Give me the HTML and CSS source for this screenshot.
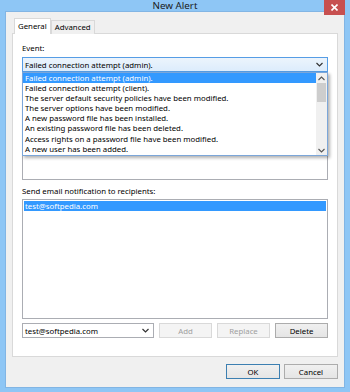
FILE: index.html
```html
<!DOCTYPE html>
<html lang="en">
<head>
  <meta charset="UTF-8">
  <title>New Alert</title>
  <link rel="stylesheet" href="styles.css">
</head>
<body>
  <div class="window">
    <!-- Title bar -->
    <div class="titlebar">
      <span class="title">New Alert</span>
      <div class="close-btn">
        <svg width="7" height="7" viewBox="0 0 7 7"><path d="M0.5 0.5 L6.5 6.5 M6.5 0.5 L0.5 6.5" stroke="#fff" stroke-width="1.6"/></svg>
      </div>
    </div>

    <div class="client">
      <div class="tabs">
        <div class="tab active">General</div>
        <div class="tab">Advanced</div>
      </div>

      <div class="panel">
        <div class="label">Event:</div>
        <div class="event-wrap">
          <div class="combo focused">
            <span>Failed connection attempt (admin).</span>
            <svg class="arrow" width="7" height="5" viewBox="0 0 7 5"><path d="M0.5 1 L3.5 4 L6.5 1" fill="none" stroke="#333" stroke-width="1.2"/></svg>
          </div>
          <div class="listbox message"></div>

          <!-- open dropdown list -->
          <div class="dropdown">
            <ul class="items">
              <li class="selected">Failed connection attempt (admin).</li>
              <li>Failed connection attempt (client).</li>
              <li>The server default security policies have been modified.</li>
              <li>The server options have been modified.</li>
              <li>A new password file has been installed.</li>
              <li>An existing password file has been deleted.</li>
              <li>Access rights on a password file have been modified.</li>
              <li>A new user has been added.</li>
            </ul>
            <div class="scrollbar">
              <svg width="7" height="5" viewBox="0 0 7 5"><path d="M0.5 4 L3.5 1 L6.5 4" fill="none" stroke="#555" stroke-width="1.1"/></svg>
              <div class="track"><div class="thumb"></div></div>
              <svg width="7" height="5" viewBox="0 0 7 5"><path d="M0.5 1 L3.5 4 L6.5 1" fill="none" stroke="#555" stroke-width="1.1"/></svg>
            </div>
          </div>
        </div>

        <div class="label second">Send email notification to recipients:</div>
        <ul class="listbox recipients">
          <li class="selected">test@softpedia.com</li>
        </ul>

        <div class="edit-row">
          <div class="combo plain">
            <span>test@softpedia.com</span>
            <svg class="arrow" width="7" height="5" viewBox="0 0 7 5"><path d="M0.5 1 L3.5 4 L6.5 1" fill="none" stroke="#333" stroke-width="1.2"/></svg>
          </div>
          <button class="btn" disabled>Add</button>
          <button class="btn" disabled>Replace</button>
          <button class="btn">Delete</button>
        </div>
      </div>

      <div class="dialog-buttons">
        <button class="btn default">OK</button>
        <button class="btn">Cancel</button>
      </div>
    </div>
  </div>
</body>
</html>
```

FILE: styles.css
```css
body {
  margin: 0;
  font-family: 'Noto Sans', 'Open Sans', sans-serif;
  font-size: 7.8px;
  color: #000;
}
ul {
  margin: 0;
  padding: 0;
  list-style: none;
}

/* Window frame */
.window {
  width: 350px;
  height: 392px;
  box-sizing: border-box;
  background: #8ec6f5;
  padding: 0 6px 7px;
  display: flex;
  flex-direction: column;
}
.titlebar {
  position: relative;
  height: 21px;
  display: flex;
  justify-content: center;
  align-items: center;
}
.title {
  font-size: 9.8px;
  color: #1a1a1a;
  margin-top: -1px;
}
.close-btn {
  position: absolute;
  top: 0;
  right: -1px;
  width: 21px;
  height: 15px;
  background: #c75050;
  display: flex;
  justify-content: center;
  align-items: center;
}

.client {
  flex: 1;
  background: #f0f0f0;
  box-shadow: 0 0 0 1px #82b5e4;
  padding: 6px 6px 8px;
  display: flex;
  flex-direction: column;
}

/* Tabs */
.tabs {
  display: flex;
  align-items: flex-end;
  padding-left: 2px;
  margin-bottom: -1px;
  position: relative;
  z-index: 1;
}
.tab {
  height: 13px;
  line-height: 12px;
  padding: 0 3px;
  border: 1px solid #d9d9d9;
  border-bottom: none;
  background: #f0f0f0;
}
.tab.active {
  height: 15px;
  line-height: 14px;
  background: #fff;
  border-color: #d9d9d9;
}

.panel {
  height: 313px;
  background: #fff;
  border: 1px solid #d9d9d9;
  padding: 9px 9px 0;
}
.label {
  height: 10px;
  line-height: 10px;
}
.label.second {
  margin-top: 6px;
}

.event-wrap {
  position: relative;
  margin-top: 4px;
}
.combo {
  height: 15px;
  box-sizing: border-box;
  border: 1px solid #abadb3;
  display: flex;
  align-items: center;
  justify-content: space-between;
  padding: 0 4px 0 2px;
  background: #fff;
}
.combo.focused {
  border-color: #569de5;
  background: linear-gradient(#ecf4fc, #dcecfc);
}
.combo.plain {
  flex: 1;
}
.arrow {
  flex: none;
}

.listbox {
  border: 1px solid #abadb3;
  box-sizing: border-box;
  background: #fff;
}
.message {
  margin-top: 2px;
  height: 106px;
}
.recipients {
  margin-top: 3px;
  height: 120px;
  padding: 1px;
}
.recipients li {
  height: 10px;
  line-height: 10px;
  padding-left: 1px;
}
.selected {
  background: #3399ff;
  color: #fff;
}

/* Open dropdown over the message box */
.dropdown {
  position: absolute;
  top: 15px;
  left: 0;
  right: 0;
  height: 84px;
  box-sizing: border-box;
  border: 1px solid #7ba6d9;
  background: #fff;
  box-shadow: 2px 2px 3px rgba(0, 0, 0, 0.3);
  display: flex;
}
.items {
  flex: 1;
}
.items li {
  height: 10.1px;
  line-height: 10px;
  padding-left: 2px;
  white-space: nowrap;
  overflow: hidden;
}
.scrollbar {
  width: 11px;
  background: #f0f0f0;
  display: flex;
  flex-direction: column;
  align-items: center;
  padding: 3px 0 2px;
}
.track {
  flex: 1;
  width: 100%;
  padding-top: 2px;
}
.thumb {
  height: 19px;
  margin: 0 1px;
  background: #cdcdcd;
}

/* Buttons */
.edit-row {
  margin-top: 4px;
  display: flex;
  gap: 5px;
}
.btn {
  width: 53px;
  height: 15px;
  padding: 0;
  font: inherit;
  color: #000;
  border: 1px solid #acacac;
  background: linear-gradient(#f0f0f0, #e5e5e5);
}
.btn:disabled {
  color: #a0a0a0;
  border-color: #d9d9d9;
  background: #f4f4f4;
}
.btn.default {
  border-color: #3c7fb1;
}
.dialog-buttons {
  margin-top: 7px;
  display: flex;
  justify-content: flex-end;
  gap: 4px;
}
.dialog-buttons .btn {
  width: 54px;
}
```
